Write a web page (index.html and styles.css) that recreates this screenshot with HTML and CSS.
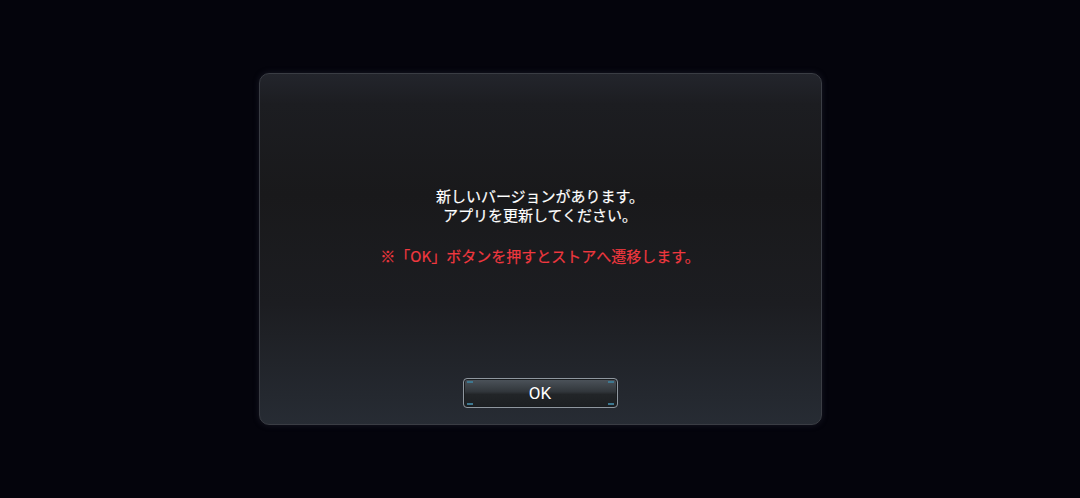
FILE: index.html
```html
<!DOCTYPE html>
<html lang="ja">
<head>
<meta charset="utf-8">
<link rel="stylesheet" href="styles.css">
</head>
<body>
<div class="stage">
  <div class="dialog">
    <div class="message">
      <p class="line">新しいバージョンがあります。</p>
      <p class="line">アプリを更新してください。</p>
      <p class="note">※「OK」ボタンを押すとストアへ遷移します。</p>
    </div>
    <button class="ok-btn"><span class="corner tl"></span><span class="corner tr"></span><span class="corner bl"></span><span class="corner br"></span>OK</button>
  </div>
</div>
</body>
</html>
```

FILE: styles.css
```css
html, body {
  margin: 0;
  padding: 0;
  background: #04040c;
  height: 100%;
}
.stage {
  width: 1080px;
  height: 498px;
  display: flex;
  justify-content: center;
  padding-top: 73px;
  box-sizing: border-box;
}
.dialog {
  width: 563px;
  height: 352px;
  box-sizing: border-box;
  border-radius: 10px;
  border: 1px solid #3a3d44;
  background: linear-gradient(to bottom, #23252c 0px, #1c1d21 30px, #19191b 120px, #1c1d21 230px, #272c34 352px);
  box-shadow: 0 0 6px rgba(60, 64, 80, 0.35);
  display: flex;
  flex-direction: column;
  align-items: center;
  padding-top: 112px;
  padding-bottom: 16px;
  font-family: "Noto Sans CJK JP", "Noto Sans", sans-serif;
}
.message {
  flex: 1;
  text-align: center;
}
.line {
  margin: 0;
  color: #ffffff;
  font-size: 15px;
  line-height: 19px;
  font-weight: 400;
  -webkit-text-stroke: 0.2px #ffffff;
}
.note {
  margin: 22px 0 0;
  color: #f0383f;
  font-size: 15px;
  line-height: 19px;
  font-weight: 400;
  -webkit-text-stroke: 0.2px #f0383f;
}
.ok-btn {
  position: relative;
  width: 155px;
  height: 30px;
  border-radius: 4px;
  border: 1px solid #8f979f;
  background: linear-gradient(to bottom, #4d545b 0%, #31363b 45%, #222528 55%, #1c1f22 100%);
  box-shadow: inset 0 0 0 1px #1a1d20;
  color: #ffffff;
  font-family: "Roboto", "Noto Sans", sans-serif;
  font-size: 17px;
  font-weight: 400;
  padding: 0;
  cursor: pointer;
}
.corner {
  position: absolute;
  width: 6px;
  height: 2px;
  background: #3e7890;
}
.corner.tl { top: 2px; left: 3px; }
.corner.tr { top: 2px; right: 3px; }
.corner.bl { bottom: 2px; left: 3px; }
.corner.br { bottom: 2px; right: 3px; }
```
